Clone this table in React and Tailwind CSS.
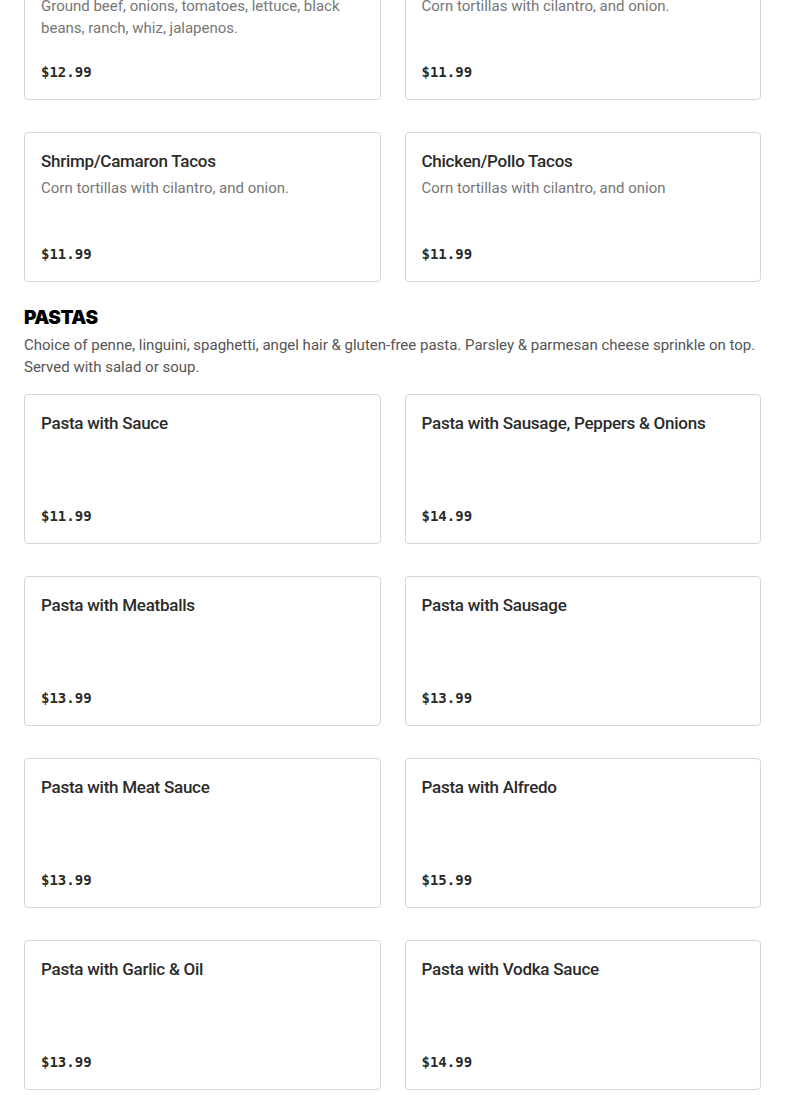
const TACOS = [
  {
    name: "Loaded Nachos",
    desc: "Ground beef, onions, tomatoes, lettuce, black beans, ranch, whiz, jalapenos.",
    price: "$12.99",
  },
  { name: "Steak/Carne Asada Tacos", desc: "Corn tortillas with cilantro, and onion.", price: "$11.99" },
  { name: "Shrimp/Camaron Tacos", desc: "Corn tortillas with cilantro, and onion.", price: "$11.99" },
  { name: "Chicken/Pollo Tacos", desc: "Corn tortillas with cilantro, and onion", price: "$11.99" },
];

const PASTAS = [
  { name: "Pasta with Sauce", price: "$11.99" },
  { name: "Pasta with Sausage, Peppers & Onions", price: "$14.99" },
  { name: "Pasta with Meatballs", price: "$13.99" },
  { name: "Pasta with Sausage", price: "$13.99" },
  { name: "Pasta with Meat Sauce", price: "$13.99" },
  { name: "Pasta with Alfredo", price: "$15.99" },
  { name: "Pasta with Garlic & Oil", price: "$13.99" },
  { name: "Pasta with Vodka Sauce", price: "$14.99" },
];

function ItemCard({ item }) {
  return (
    <div className="flex h-[150px] flex-col rounded-[4px] border border-[#d6d6d6] bg-white px-4 py-4">
      <div className="text-[17px] font-medium leading-6 tracking-[-0.015em] text-[#2b2b2b]">{item.name}</div>
      {item.desc && (
        <div className="mt-1 text-[15px] leading-[22px] text-[#767676]">{item.desc}</div>
      )}
      <div className="mt-auto font-['DejaVu_Sans_Mono',monospace] text-[14px] font-bold leading-[22px] text-[#292929]">
        {item.price}
      </div>
    </div>
  );
}

export default function App() {
  return (
    <div className="min-h-screen bg-white font-['Roboto',sans-serif]">
      <div className="-mt-[50px] px-6 pb-8">
        {/* Tacos (tail of section) */}
        <div className="grid grid-cols-2 gap-x-6 gap-y-8">
          {TACOS.map((item) => (
            <ItemCard key={item.name} item={item} />
          ))}
        </div>

        {/* Pastas */}
        <h2 className="mt-6 font-['Inter',sans-serif] text-[19px] font-black uppercase leading-6 tracking-tight text-black">
          Pastas
        </h2>
        <p className="mt-1 text-[15px] leading-[22px] text-[#555]">
          Choice of penne, linguini, spaghetti, angel hair &amp; gluten-free pasta. Parsley &amp; parmesan cheese
          sprinkle on top. Served with salad or soup.
        </p>
        <div className="mt-4 grid grid-cols-2 gap-x-6 gap-y-8">
          {PASTAS.map((item) => (
            <ItemCard key={item.name} item={item} />
          ))}
        </div>
      </div>
    </div>
  );
}
